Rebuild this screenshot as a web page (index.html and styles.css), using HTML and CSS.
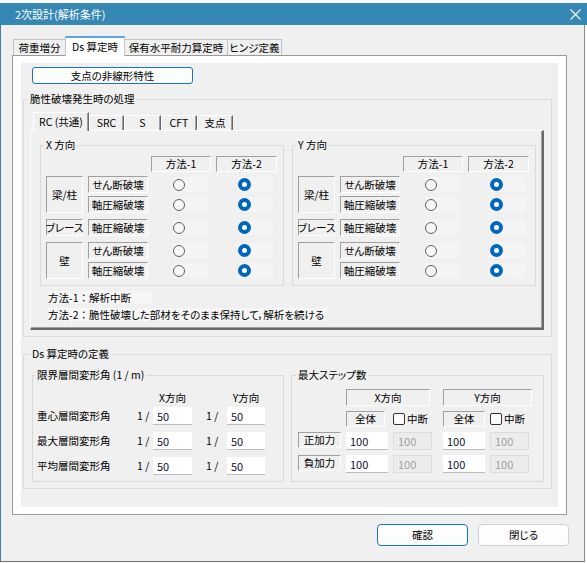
FILE: index.html
```html
<!DOCTYPE html>
<html lang="ja">
<head>
<meta charset="utf-8">
<title>2次設計(解析条件)</title>
<link rel="stylesheet" href="styles.css">
</head>
<body>
<div class="window">
  <div class="titlebar">
    <span class="title">2次設計(解析条件)</span>
    <svg class="close" width="11" height="11" viewBox="0 0 11 11"><path d="M0.5 0.5L10.5 10.5M10.5 0.5L0.5 10.5" stroke="#ffffff" stroke-width="1.1"/></svg>
  </div>
  <div class="client">
    <div class="tabs">
      <div class="tab t1">荷重増分</div>
      <div class="tab t2 active">Ds 算定時</div>
      <div class="tab t3">保有水平耐力算定時</div>
      <div class="tab t4">ヒンジ定義</div>
    </div>
    <div class="panel">
      <div class="page">
        <button class="btn-support">支点の非線形特性</button>

        <fieldset class="grp brittle">
          <legend>脆性破壊発生時の処理</legend>
          <div class="itabs">
            <div class="itab active w-rc">RC (共通)</div>
            <div class="itab w-src">SRC</div>
            <div class="itab w-s">S</div>
            <div class="itab w-cft">CFT</div>
            <div class="itab w-spt">支点</div>
          </div>
          <div class="ipanel">
            <div class="dirs">
              <fieldset class="grp dir">
                <legend>X 方向</legend>
                <div class="dir-body">
                  <div class="mhead">
                    <div class="sbox hbox">方法-1</div>
                    <div class="sbox hbox h2">方法-2</div>
                  </div>
                  <div class="blk">
                    <div class="sbox cat">梁/柱</div>
                    <div class="blk-rows">
                      <div class="mrow"><div class="sbox typ">せん断破壊</div><div class="rcell"><span class="rc"><span class="radio"></span></span></div><div class="rcell c2"><span class="rc"><span class="radio on"></span></span></div></div>
                      <div class="mrow"><div class="sbox typ">軸圧縮破壊</div><div class="rcell"><span class="rc"><span class="radio"></span></span></div><div class="rcell c2"><span class="rc"><span class="radio on"></span></span></div></div>
                    </div>
                  </div>
                  <div class="blk">
                    <div class="sbox cat">ブレース</div>
                    <div class="blk-rows">
                      <div class="mrow"><div class="sbox typ">軸圧縮破壊</div><div class="rcell"><span class="rc"><span class="radio"></span></span></div><div class="rcell c2"><span class="rc"><span class="radio on"></span></span></div></div>
                    </div>
                  </div>
                  <div class="blk">
                    <div class="sbox cat">壁</div>
                    <div class="blk-rows">
                      <div class="mrow"><div class="sbox typ">せん断破壊</div><div class="rcell"><span class="rc"><span class="radio"></span></span></div><div class="rcell c2"><span class="rc"><span class="radio on"></span></span></div></div>
                      <div class="mrow"><div class="sbox typ">軸圧縮破壊</div><div class="rcell"><span class="rc"><span class="radio"></span></span></div><div class="rcell c2"><span class="rc"><span class="radio on"></span></span></div></div>
                    </div>
                  </div>
                </div>
              </fieldset>

              <fieldset class="grp dir">
                <legend>Y 方向</legend>
                <div class="dir-body">
                  <div class="mhead">
                    <div class="sbox hbox">方法-1</div>
                    <div class="sbox hbox h2">方法-2</div>
                  </div>
                  <div class="blk">
                    <div class="sbox cat">梁/柱</div>
                    <div class="blk-rows">
                      <div class="mrow"><div class="sbox typ">せん断破壊</div><div class="rcell"><span class="rc"><span class="radio"></span></span></div><div class="rcell c2"><span class="rc"><span class="radio on"></span></span></div></div>
                      <div class="mrow"><div class="sbox typ">軸圧縮破壊</div><div class="rcell"><span class="rc"><span class="radio"></span></span></div><div class="rcell c2"><span class="rc"><span class="radio on"></span></span></div></div>
                    </div>
                  </div>
                  <div class="blk">
                    <div class="sbox cat">ブレース</div>
                    <div class="blk-rows">
                      <div class="mrow"><div class="sbox typ">軸圧縮破壊</div><div class="rcell"><span class="rc"><span class="radio"></span></span></div><div class="rcell c2"><span class="rc"><span class="radio on"></span></span></div></div>
                    </div>
                  </div>
                  <div class="blk">
                    <div class="sbox cat">壁</div>
                    <div class="blk-rows">
                      <div class="mrow"><div class="sbox typ">せん断破壊</div><div class="rcell"><span class="rc"><span class="radio"></span></span></div><div class="rcell c2"><span class="rc"><span class="radio on"></span></span></div></div>
                      <div class="mrow"><div class="sbox typ">軸圧縮破壊</div><div class="rcell"><span class="rc"><span class="radio"></span></span></div><div class="rcell c2"><span class="rc"><span class="radio on"></span></span></div></div>
                    </div>
                  </div>
                </div>
              </fieldset>
            </div>
            <div class="notes">
              <div class="note n1">方法-1<span class="colon">：</span>解析中断</div>
              <div class="note n2">方法-2<span class="colon">：</span>脆性破壊した部材をそのまま保持して，解析を続ける</div>
            </div>
          </div>
        </fieldset>

        <fieldset class="grp dsdef">
          <legend>Ds 算定時の定義</legend>
          <div class="ds-inner">
            <fieldset class="grp lim">
              <legend>限界層間変形角 (1 / m)</legend>
              <div class="lim-head">
                <span class="lh lh-x">X方向</span>
                <span class="lh lh-y">Y方向</span>
              </div>
              <div class="lim-grid">
                <span class="lbl">重心層間変形角</span><span class="frac">1 /</span><input class="inp" type="text" value="50"><span></span><span class="frac">1 /</span><input class="inp" type="text" value="50">
                <span class="lbl">最大層間変形角</span><span class="frac">1 /</span><input class="inp" type="text" value="50"><span></span><span class="frac">1 /</span><input class="inp" type="text" value="50">
                <span class="lbl">平均層間変形角</span><span class="frac">1 /</span><input class="inp" type="text" value="50"><span></span><span class="frac">1 /</span><input class="inp" type="text" value="50">
              </div>
            </fieldset>
            <fieldset class="grp steps">
              <legend>最大ステップ数</legend>
              <div class="steps-grid">
                <div class="sbox sh sh-x">X方向</div>
                <div class="sbox sh sh-y">Y方向</div>

                <div class="sbox all all-x">全体</div>
                <label class="cbx cbx-x"><span class="chk"></span>中断</label>
                <div class="sbox all all-y">全体</div>
                <label class="cbx cbx-y"><span class="chk"></span>中断</label>

                <div class="sbox rl">正加力</div>
                <input class="inp sinp" type="text" value="100">
                <input class="inp sinp dis" type="text" value="100" disabled>
                <input class="inp sinp" type="text" value="100">
                <input class="inp sinp dis" type="text" value="100" disabled>

                <div class="sbox rl">負加力</div>
                <input class="inp sinp" type="text" value="100">
                <input class="inp sinp dis" type="text" value="100" disabled>
                <input class="inp sinp" type="text" value="100">
                <input class="inp sinp dis" type="text" value="100" disabled>
              </div>
            </fieldset>
          </div>
        </fieldset>
      </div>
    </div>
    <div class="actions">
      <button class="btn primary">確認</button>
      <button class="btn">閉じる</button>
    </div>
  </div>
</div>
</body>
</html>
```

FILE: styles.css
```css
* { box-sizing: border-box; }
html, body { margin: 0; padding: 0; }
body {
  width: 587px;
  height: 563px;
  overflow: hidden;
  background: #fbfbfb;
  font-family: "Noto Sans CJK JP", "Noto Sans", sans-serif;
  font-size: 10.5px;
  line-height: 12px;
  color: #000;
  font-feature-settings: "palt";
}
button, input { font-feature-settings: "palt"; }

.window {
  margin-top: 3px;
  width: 587px;
  height: 559px;
  display: flex;
  flex-direction: column;
}

.titlebar {
  height: 22px;
  flex: none;
  background: #3688b4;
  color: #fff;
  display: flex;
  align-items: center;
  justify-content: space-between;
  padding: 0 6px 0 15px;
  font-size: 11px;
}

.client {
  flex: 1;
  width: 585px;
  background: #f0f0f0;
  border-left: 1px solid #3a7fab;
  border-right: 1px solid #8c8c8c;
  border-bottom: 1px solid #707070;
  padding: 11px 0 0 11px;
}

/* top tabs */
.tabs {
  display: flex;
  align-items: flex-end;
  height: 19px;
  padding-left: 1px;
}
.tab {
  height: 16px;
  border: 1px solid #c4c4c4;
  border-bottom: none;
  background: #f0f0f0;
  display: flex;
  align-items: center;
  justify-content: center;
  margin-right: -1px;
}
.tab.active {
  height: 20px;
  margin-bottom: -1px;
  background: #fff;
  border-color: #c4c4c4;
  border-top: 2px solid #5aa5e6;
  position: relative;
  z-index: 1;
  padding-bottom: 1px;
}
.t1 { width: 53px; }
.t2 { width: 60px; }
.t3 { width: 104px; }
.t4 { width: 55px; }

.panel {
  width: 555px;
  height: 460px;
  border: 1px solid #9a9a9a;
  background: #fff;
  padding: 7px 8px 7px 8px;
}
.page {
  height: 100%;
  background: #f0f0f0;
  padding: 4px 6px 0 2px;
}

.btn-support {
  display: block;
  width: 161px;
  height: 17px;
  margin-left: 9px;
  padding: 0;
  border: 1px solid #1a73c8;
  border-radius: 3px;
  background: #fdfdfd;
  font: inherit;
  color: #000;
}

/* group boxes */
fieldset.grp {
  margin: 0;
  min-width: 0;
  border: 1px solid #dadada;
}
fieldset.grp > legend {
  padding: 0 2px;
  margin-left: -2px;
  line-height: 12px;
  height: 12px;
}

.brittle {
  margin-top: 9px !important;
  padding: 7px 7px 6px 6px;
}

/* inner tabs */
.itabs {
  display: flex;
  align-items: flex-end;
  height: 18px;
  padding-left: 3px;
}
.itab {
  height: 15px;
  background: #f0f0f0;
  border-top: 1px solid #fff;
  border-left: 1px solid #fff;
  border-right: 1px solid #6a6a6a;
  box-shadow: inset -1px 0 0 #a0a0a0;
  display: flex;
  align-items: center;
  justify-content: center;
}
.itab.active {
  height: 19px;
  margin-bottom: -1px;
  padding-bottom: 1px;
  position: relative;
  z-index: 1;
}
.w-rc { width: 56px; }
.w-src { width: 35px; }
.w-s { width: 37px; }
.w-cft { width: 36px; }
.w-spt { width: 36px; }

.ipanel {
  width: 514px;
  background: #f0f0f0;
  border-top: 1px solid #fff;
  border-left: 1px solid #fff;
  border-right: 2px solid #6a6a6a;
  border-bottom: 2px solid #6a6a6a;
  box-shadow: inset -1px -1px 0 #a0a0a0;
  padding: 8px 6px 7px 9px;
}

.dirs {
  display: flex;
  gap: 8px;
}
.dir {
  width: 244px;
  padding: 5px 6px 6px 5px;
}
.dir > legend { padding: 0 2px 0 1px; margin-left: 0; }

.dir-body {
  display: flex;
  flex-direction: column;
  gap: 6px;
}
.mhead {
  display: flex;
  gap: 5px;
  height: 16px;
  margin-left: 105px;
  margin-bottom: -2px;
}
.hbox { width: 60px; }
.hbox.h2 { width: 61px; }

.sbox {
  border: 1px solid;
  border-color: #a0a0a0 #ffffff #ffffff #a0a0a0;
  display: flex;
  align-items: center;
  justify-content: center;
  white-space: nowrap;
}

.blk {
  display: flex;
  gap: 5px;
}
.cat { width: 37px; }
.blk-rows {
  display: flex;
  flex-direction: column;
  gap: 3px;
}
.mrow {
  display: flex;
  height: 17px;
}
.typ {
  width: 60px;
  margin-right: 3px;
}
.rcell {
  width: 60px;
  padding-left: 22px;
  display: flex;
  align-items: center;
}
.rcell.c2 {
  width: 61px;
  margin-left: 5px;
}
.rc {
  width: 35px;
  height: 15px;
  display: flex;
  align-items: center;
  background: #f4f4f4;
}
.radio {
  width: 12px;
  height: 12px;
  border-radius: 50%;
  border: 1px solid #606060;
  background: #f7f7f7;
}
.radio.on {
  width: 13px;
  height: 13px;
  border: 4px solid #0067c0;
  background: #fff;
}

.notes {
  display: flex;
  flex-direction: column;
  gap: 4px;
  margin: 5px 0 0 8px;
}
.note {
  height: 13px;
  line-height: 13px;
  background: #f6f6f6;
  white-space: nowrap;
}
.colon { font-feature-settings: normal; }
.n1 { width: 104px; }
.n2 { width: 279px; }

/* Ds definition */
.dsdef {
  margin-top: 11px !important;
  padding: 9px 7px 6px 8px;
}
.dsdef > legend { margin-left: -3px; }
.ds-inner {
  display: flex;
  gap: 7px;
}
.lim {
  width: 252px;
  padding: 11px 4px 6px 4px;
}
.lim > legend { padding: 0 2px 0 1px; margin-left: 0; }
.steps {
  width: 253px;
  padding: 8px 6px 6px 6px;
}
.steps > legend { padding: 0 2px 0 0; margin-left: 0; }

.lim-head,
.lim-grid {
  display: grid;
  grid-template-columns: 100px 16px 39px 14px 21px 38px;
}
.lim-head {
  height: 12px;
  margin-bottom: 3px;
}
.lh { text-align: center; }
.lh-x { grid-column: 3; }
.lh-y { grid-column: 6; }
.lim-grid {
  grid-auto-rows: 18px;
  row-gap: 7px;
  align-items: center;
}
.lbl { white-space: nowrap; }

.inp {
  display: block;
  width: 100%;
  height: 18px;
  margin: 0;
  padding: 0 0 0 4px;
  border: none;
  border-bottom: 1px solid #bdbdbd;
  background: #fff;
  font: inherit;
  font-size: 11px;
  color: #101030;
  outline: none;
}

.steps-grid {
  display: grid;
  grid-template-columns: 43px 42px 45px 42px 41px;
  grid-template-rows: 17px 16px 18px 18px;
  column-gap: 5px;
  row-gap: 5px;
}
.sh-x { grid-column: 2 / span 2; width: 84px; }
.sh-y { grid-column: 4 / span 2; width: 89px; }
.all-x { grid-column: 2; width: 39px; }
.all-y { grid-column: 4; width: 42px; }
.cbx {
  display: flex;
  align-items: center;
  gap: 2px;
  white-space: nowrap;
}
.cbx-x { grid-column: 3; }
.cbx-y { grid-column: 5; }
.chk {
  width: 12px;
  height: 12px;
  border: 1px solid #333;
  border-radius: 2px;
  background: #fff;
}
.rl {
  grid-column: 1;
  height: 16px;
}
.sinp.dis {
  width: 39px;
  background: #ececec;
  border: 1px solid #dddddd;
  color: #a0a0a0;
}

/* bottom buttons */
.actions {
  width: 557px;
  display: flex;
  justify-content: flex-end;
  gap: 10px;
  margin-top: 9px;
}
.btn {
  width: 91px;
  height: 22px;
  padding: 0;
  border: 1px solid #d0d0d0;
  border-radius: 4px;
  background: #fdfdfd;
  font: inherit;
  color: #000;
}
.btn.primary {
  border-color: #1a73c8;
}
```
